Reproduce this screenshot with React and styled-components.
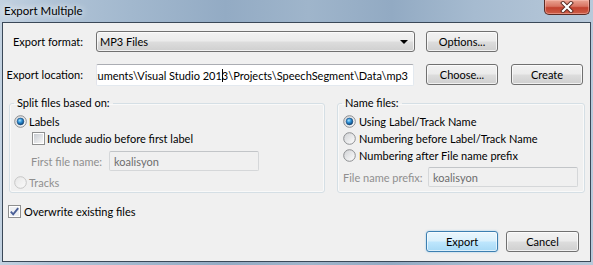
import React, { useId } from "react";
import styled, { createGlobalStyle } from "styled-components";

const GlobalStyle = createGlobalStyle`
  html, body {
    margin: 0;
    padding: 0;
  }
  body {
    font-family: Lato, "Noto Sans", sans-serif;
    font-size: 11px;
    color: #000;
  }
`;

function RadioMark({ checked, disabled }) {
  const id = useId().replace(/:/g, "");
  return (
    <svg width="13" height="13" viewBox="0 0 13 13">
      <defs>
        <linearGradient id={`rb${id}`} x1="0" y1="0" x2="1" y2="1">
          <stop offset="0" stopColor={disabled ? "#e6e6e6" : "#cfd1d4"} />
          <stop offset="1" stopColor={disabled ? "#fbfbfb" : "#ffffff"} />
        </linearGradient>
        <radialGradient id={`rd${id}`} cx="0.4" cy="0.35" r="0.7">
          <stop offset="0" stopColor="#a9e4ff" />
          <stop offset="0.45" stopColor="#2b8fd6" />
          <stop offset="1" stopColor="#0d3a68" />
        </radialGradient>
      </defs>
      <circle
        cx="6.5"
        cy="6.5"
        r="5.8"
        fill={`url(#rb${id})`}
        stroke={disabled ? "#c6c6c6" : "#8c8e91"}
        strokeWidth="1"
      />
      {checked && <circle cx="6.5" cy="6.5" r="3.4" fill={`url(#rd${id})`} stroke="#1b4a7c" strokeWidth="0.6" />}
    </svg>
  );
}

function CheckMark({ checked }) {
  const id = useId().replace(/:/g, "");
  return (
    <svg width="13" height="13" viewBox="0 0 13 13">
      <defs>
        <linearGradient id={`cb${id}`} x1="0" y1="0" x2="1" y2="1">
          <stop offset="0" stopColor="#c8ccd2" />
          <stop offset="1" stopColor="#f7f7f7" />
        </linearGradient>
      </defs>
      <rect x="0.5" y="0.5" width="12" height="12" fill="#fff" stroke="#8e8f8f" />
      <rect x="2" y="2" width="9" height="9" fill={checked ? "#eef0f3" : `url(#cb${id})`} />
      {checked && (
        <path d="M2.8 6.6 L5.2 9.3 L10.2 3.2" fill="none" stroke="#4a5f97" strokeWidth="1.9" />
      )}
    </svg>
  );
}

export default function App() {
  return (
    <>
      <GlobalStyle />
      <Window>
        <TitleBar>
          <Title>Export Multiple</Title>
          <CloseButton>
            <svg width="16" height="12" viewBox="0 0 16 12">
              <path
                d="M4 2 L12 10 M12 2 L4 10"
                stroke="#5a2a22"
                strokeWidth="4"
                strokeLinecap="square"
              />
              <path
                d="M4 2 L12 10 M12 2 L4 10"
                stroke="#fff"
                strokeWidth="2.2"
                strokeLinecap="square"
              />
            </svg>
          </CloseButton>
        </TitleBar>

        <Client>
          <FieldRow $mt={8}>
            <FieldLabel>Export format:</FieldLabel>
            <ComboBox>
              <span>MP3 Files</span>
              <ComboArrow />
            </ComboBox>
            <PushButton $w={72} $ml={11}>
              Options...
            </PushButton>
          </FieldRow>

          <FieldRow $mt={12}>
            <FieldLabel>Export location:</FieldLabel>
            <TextBox $w={318} $h={22}>
              <PathText>
                C:\Users\Documents\Visual Studio 201<Caret />3\Projects\SpeechSegment\Data\mp3
              </PathText>
            </TextBox>
            <PushButton $w={72} $ml={12}>
              Choose...
            </PushButton>
            <PushButton $w={72} $ml={13}>
              Create
            </PushButton>
          </FieldRow>

          <GroupRow>
            <GroupBox $w={316} $pl={4}>
              <GroupLegend>Split files based on:</GroupLegend>
              <OptionRow>
                <RadioMark checked />
                <OptionText>Labels</OptionText>
              </OptionRow>
              <OptionRow $indent={18}>
                <CheckMark />
                <OptionText>Include audio before first label</OptionText>
              </OptionRow>
              <InlineField $mt={4} $indent={17}>
                <FieldCaption $w={78}>First file name:</FieldCaption>
                <TextBox $w={150} $h={20} $disabled>
                  koalisyon
                </TextBox>
              </InlineField>
              <OptionRow $mt={3}>
                <RadioMark disabled />
                <OptionText $disabled>Tracks</OptionText>
              </OptionRow>
            </GroupBox>

            <GroupBox $w={248} $pl={5} $ml={12}>
              <GroupLegend $ml={-1}>Name files:</GroupLegend>
              <OptionRow>
                <RadioMark checked />
                <OptionText $gap={3}>Using Label/Track Name</OptionText>
              </OptionRow>
              <OptionRow>
                <RadioMark />
                <OptionText $gap={3}>Numbering before Label/Track Name</OptionText>
              </OptionRow>
              <OptionRow>
                <RadioMark />
                <OptionText $gap={3}>Numbering after File name prefix</OptionText>
              </OptionRow>
              <InlineField $mt={3}>
                <FieldCaption $w={85}>File name prefix:</FieldCaption>
                <TextBox $w={150} $h={20} $disabled>
                  koalisyon
                </TextBox>
              </InlineField>
            </GroupBox>
          </GroupRow>

          <FooterCheck>
            <CheckMark checked />
            <OptionText $gap={3}>Overwrite existing files</OptionText>
          </FooterCheck>

          <ButtonBar>
            <PushButton $w={72} $default>
              Export
            </PushButton>
            <PushButton $w={73} $ml={8}>
              Cancel
            </PushButton>
          </ButtonBar>
        </Client>
      </Window>
    </>
  );
}

const Window = styled.div`
  width: 593px;
  height: 265px;
  display: flex;
  flex-direction: column;
  box-sizing: border-box;
  background: linear-gradient(
    90deg,
    #c3d2e1 0%,
    #b1c4d7 8%,
    #a2b8ce 22%,
    #93abc4 38%,
    #9fb5cb 52%,
    #92aac3 66%,
    #a6bbd0 80%,
    #b8c9da 100%
  );
  overflow: hidden;
`;

const TitleBar = styled.div`
  height: 22px;
  flex: none;
  display: flex;
  justify-content: space-between;
  align-items: flex-start;
  padding-left: 4px;
`;

const Title = styled.div`
  line-height: 21px;
  font-size: 11.5px;
  color: #000;
  text-shadow: 0 0 6px rgba(255, 255, 255, 0.9), 0 0 10px rgba(255, 255, 255, 0.7);
`;

const CloseButton = styled.div`
  width: 46px;
  height: 15px;
  margin-right: 3px;
  box-sizing: border-box;
  border: 1px solid #5b2b24;
  border-top: none;
  border-radius: 0 0 5px 5px;
  display: flex;
  align-items: center;
  justify-content: center;
  background: linear-gradient(#eaa493 0%, #d87462 45%, #c2412e 55%, #cd5f49 100%);
  box-shadow: inset 0 0 0 1px rgba(255, 200, 190, 0.45);
`;

const Client = styled.div`
  flex: 1;
  margin: 0 2px 3px 2px;
  border: 1px solid #3a4858;
  background: #f0f0f0;
  display: flex;
  flex-direction: column;
`;

const FieldRow = styled.div`
  display: flex;
  align-items: flex-start;
  margin-top: ${(p) => p.$mt}px;
`;

const FieldLabel = styled.div`
  width: 80px;
  margin-right: 13px;
  text-align: right;
  line-height: 21px;
  white-space: nowrap;
`;

const buttonFace = `
  box-sizing: border-box;
  border: 1px solid #707070;
  border-radius: 3px;
  background: linear-gradient(#f2f2f2 0%, #ebebeb 48%, #dddddd 52%, #cfcfcf 100%);
  box-shadow: inset 0 0 0 1px rgba(255, 255, 255, 0.7);
`;

const ComboBox = styled.div`
  ${buttonFace}
  width: 319px;
  height: 21px;
  display: flex;
  align-items: center;
  justify-content: space-between;
  padding: 0 6px 0 3px;
`;

const ComboArrow = styled.span`
  width: 0;
  height: 0;
  border-left: 4px solid transparent;
  border-right: 4px solid transparent;
  border-top: 4px solid #000;
`;

const PushButton = styled.div`
  ${buttonFace}
  width: ${(p) => p.$w}px;
  height: 21px;
  margin-left: ${(p) => p.$ml || 0}px;
  display: flex;
  align-items: center;
  justify-content: center;
  ${(p) =>
    p.$default &&
    `
    border-color: #3c7fb1;
    background: linear-gradient(#eaf6fd 0%, #d9f0fc 48%, #bee6fd 52%, #a7d9f5 100%);
    box-shadow: inset 0 0 0 1px rgba(255, 255, 255, 0.6), 0 0 2px rgba(60, 160, 230, 0.5);
  `}
`;

const TextBox = styled.div`
  box-sizing: border-box;
  width: ${(p) => p.$w}px;
  height: ${(p) => p.$h}px;
  border: 1px solid ${(p) => (p.$disabled ? "#c2c5c8" : "#abadb3")};
  border-left-color: ${(p) => (p.$disabled ? "#d5d7d9" : "#e2e3ea")};
  border-right-color: ${(p) => (p.$disabled ? "#d5d7d9" : "#e3e9ef")};
  border-bottom-color: ${(p) => (p.$disabled ? "#d5d7d9" : "#e3e9ef")};
  border-radius: 2px;
  background: ${(p) => (p.$disabled ? "#f0f0f0" : "#fff")};
  color: ${(p) => (p.$disabled ? "#6d6d6d" : "#000")};
  display: flex;
  align-items: center;
  justify-content: ${(p) => (p.$disabled ? "flex-start" : "flex-end")};
  padding: 0 5px 0 4px;
  overflow: hidden;
  white-space: nowrap;
`;

const PathText = styled.span`
  flex: none;
  white-space: nowrap;
`;

const Caret = styled.span`
  display: inline-block;
  width: 1px;
  height: 13px;
  margin-right: -1px;
  background: #000;
  vertical-align: -2px;
`;

const GroupRow = styled.div`
  display: flex;
  margin-top: 10px;
  padding-left: 6px;
`;

const GroupBox = styled.fieldset`
  box-sizing: border-box;
  width: ${(p) => p.$w}px;
  height: 97px;
  min-width: 0;
  margin: 0 0 0 ${(p) => p.$ml || 0}px;
  padding: 3px 4px 0 ${(p) => p.$pl}px;
  border: 1px solid #d5dfe5;
  border-radius: 3px;
  box-shadow: inset 0 0 0 1px rgba(255, 255, 255, 0.6);
`;

const GroupLegend = styled.legend`
  padding: 0 3px;
  margin-left: ${(p) => p.$ml || 0}px;
  line-height: 14px;
  font-size: 11px;
`;

const OptionRow = styled.div`
  height: 17px;
  display: flex;
  align-items: center;
  margin-top: ${(p) => p.$mt || 0}px;
  margin-left: ${(p) => p.$indent || 0}px;
`;

const OptionText = styled.span`
  margin-left: ${(p) => p.$gap || 2}px;
  white-space: nowrap;
  color: ${(p) => (p.$disabled ? "#8f8f8f" : "#000")};
`;

const InlineField = styled.div`
  display: flex;
  align-items: center;
  margin-top: ${(p) => p.$mt || 0}px;
  margin-left: ${(p) => p.$indent || 0}px;
`;

const FieldCaption = styled.span`
  width: ${(p) => p.$w}px;
  color: #8f8f8f;
  white-space: nowrap;
`;

const FooterCheck = styled.div`
  height: 17px;
  display: flex;
  align-items: center;
  margin-top: 10px;
  padding-left: 5px;
`;

const ButtonBar = styled.div`
  display: flex;
  justify-content: flex-end;
  margin-top: 11px;
  padding-right: 11px;
`;
